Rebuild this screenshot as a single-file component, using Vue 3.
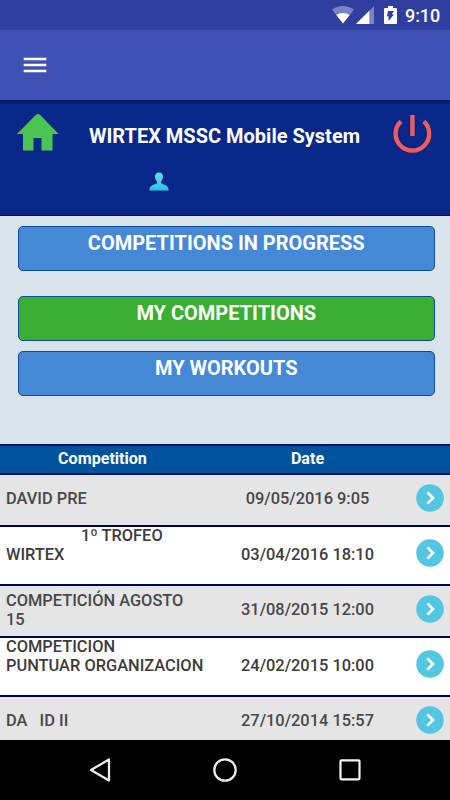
<script setup>
const buttons = [
  { label: 'COMPETITIONS IN PROGRESS', kind: 'first' },
  { label: 'MY COMPETITIONS', kind: 'active' },
  { label: 'MY WORKOUTS', kind: '' },
]
const rows = [
  { lines: ['DAVID PRE'], date: '09/05/2016 9:05', size: 'short' },
  { lines: ['1º TROFEO', 'WIRTEX', ' '], date: '03/04/2016 18:10', size: 'tall', indent: true },
  { lines: ['COMPETICIÓN AGOSTO', '15'], date: '31/08/2015 12:00', size: 'short' },
  { lines: ['COMPETICION', 'PUNTUAR ORGANIZACION', ' '], date: '24/02/2015 10:00', size: 'tall' },
  { lines: ['DA   ID II'], date: '27/10/2014 15:57', size: 'last' },
]
</script>

<template>
  <div class="phone">
    <div class="status">
      <svg class="wifi" width="22" height="18" viewBox="0 0 22 18">
        <path d="M0 3.6C6.5-1.1 15.5-1.1 22 3.6L11 17.6Z" fill="#7b84c3" />
        <path d="M4.3 9C8.3 6.2 13.7 6.2 17.7 9L11 17.6Z" fill="#fff" />
      </svg>
      <svg class="signal" width="18" height="18" viewBox="0 0 18 18">
        <path d="M0 18L18 0V18Z" fill="#7b84c3" />
        <path d="M0 18L13.3 4.7V18Z" fill="#fff" />
      </svg>
      <svg class="battery" width="13" height="18" viewBox="0 0 13 18">
        <path d="M4 0H9V2H12Q13 2 13 3V17Q13 18 12 18H1Q0 18 0 17V3Q0 2 1 2H4Z" fill="#fff" />
        <path d="M4 5H10L7.8 8.4H10L4.5 15V10.3H3Z" fill="#303f9f" />
      </svg>
      <span class="clock">9:10</span>
    </div>
    <div class="toolbar">
      <svg class="menu" width="24" height="18" viewBox="0 0 24 18">
        <path d="M.7 3H23.3M.7 9H23.3M.7 15H23.3" stroke="#fff" stroke-width="2.3" />
      </svg>
    </div>
    <header class="brand">
      <div class="brand-row">
        <svg width="42" height="37" viewBox="0 0 42 37">
          <path d="M19 .7Q21-.5 23 .7L41.5 20H35.5V36.5H24.5V24H16.5V36.5H6V20H0Z" fill="#4bc551" />
        </svg>
        <h1>WIRTEX MSSC Mobile System</h1>
        <svg width="40" height="40" viewBox="0 0 40 40">
          <path d="M8 7.4A16.8 16.8 0 1 0 30.8 7.4" fill="none" stroke="#f15b5b" stroke-width="4.4" />
          <path d="M19.4 1V22" stroke="#f15b5b" stroke-width="4.4" />
        </svg>
      </div>
      <svg class="user" width="20" height="19" viewBox="0 0 20 19">
        <defs>
          <linearGradient id="u" x1="0" y1="0" x2="0" y2="1">
            <stop offset="0" stop-color="#6bd9ee" />
            <stop offset="1" stop-color="#28c3e6" />
          </linearGradient>
        </defs>
        <path d="M10 .5C12.6.5 14.2 2.5 14 5C13.8 7.4 12.7 8.5 12.1 9.5V11.2C14.5 12.5 19.7 13 19.7 18.5H.3C.3 13 5.5 12.5 7.9 11.2V9.5C7.3 8.5 6.2 7.4 6 5C5.8 2.5 7.4.5 10 .5Z" fill="url(#u)" />
      </svg>
    </header>
    <nav class="actions">
      <button v-for="b in buttons" :key="b.label" :class="b.kind">{{ b.label }}</button>
    </nav>
    <section class="list">
      <div class="head">
        <span class="name">Competition</span>
        <span class="date">Date</span>
      </div>
      <div v-for="(r, n) in rows" :key="r.date" class="row" :class="[r.size, { alt: n % 2 === 0 }]">
        <div class="name">
          <div v-for="(l, i) in r.lines" :key="i" :class="{ indent: r.indent && i === 0 }">{{ l }}</div>
        </div>
        <div class="date">{{ r.date }}</div>
        <svg class="go" width="28" height="28" viewBox="0 0 28 28">
          <circle cx="14" cy="14" r="13.8" fill="#53c6e2" />
          <path d="M11.4 8.4L17 14L11.4 19.6" fill="none" stroke="#fff" stroke-width="2.7" />
        </svg>
      </div>
    </section>
    <footer class="navbar">
      <svg width="22" height="26" viewBox="0 0 22 26">
        <path d="M20 2.5V23.5L2 13Z" fill="none" stroke="#ececec" stroke-width="2.3" stroke-linejoin="round" />
      </svg>
      <svg width="26" height="26" viewBox="0 0 26 26">
        <circle cx="13" cy="13" r="10.7" fill="none" stroke="#ececec" stroke-width="2.3" />
      </svg>
      <svg width="24" height="26" viewBox="0 0 24 26">
        <rect x="2.5" y="3.3" width="19" height="19" rx="1" fill="none" stroke="#f4f4f4" stroke-width="2.2" />
      </svg>
    </footer>
  </div>
</template>

<style>
body { margin: 0; }
</style>

<style scoped>
.phone {
  width: 450px;
  height: 800px;
  display: flex;
  flex-direction: column;
  overflow: hidden;
  background: #d9e3eb;
  font-family: Roboto, sans-serif;
}
svg { display: block; flex: none; }
.status {
  height: 30px;
  flex: none;
  box-sizing: border-box;
  background: #303f9f;
  display: flex;
  padding: 6px 10px 0 0;
  justify-content: flex-end;
}
.signal { margin-left: 2px; }
.battery { margin: 0 8px 0 10px; }
.clock {
  width: 35px;
  color: #fff;
  font-size: 18px;
  line-height: 20px;
  font-weight: 500;
  letter-spacing: -0.1px;
  white-space: nowrap;
}
.toolbar {
  height: 70px;
  flex: none;
  background: #3f51b5;
  display: flex;
}
.menu { margin: 26px 0 0 23px; }
.brand {
  height: 116px;
  flex: none;
  box-sizing: border-box;
  background: linear-gradient(#041a60, #072888 5px);
  border-bottom: 1px solid #00007f;
}
.brand-row {
  height: 56px;
  box-sizing: border-box;
  display: flex;
  align-items: flex-start;
  padding: 14px 17px 0 17px;
  justify-content: space-between;
}
h1 {
  margin: 10px 3px 0 0;
  color: #fff;
  font-size: 20px;
  line-height: 24px;
  font-weight: 700;
  white-space: nowrap;
}
.user { margin: 16px 0 0 149px; }
.actions {
  height: 228px;
  flex: none;
  box-sizing: border-box;
  padding: 10px 15px 0 17.5px;
  display: flex;
  flex-direction: column;
  gap: 10px;
}
button {
  height: 45px;
  box-sizing: border-box;
  padding: 0 0 11px;
  border: 1px solid #0c4ba0;
  border-radius: 5px;
  background: #4589d6;
  color: #fff;
  font: 700 20px/22px Roboto, sans-serif;
}
button.first { margin-bottom: 15px; }
button.active { background: #39ae31; }
.head {
  height: 31px;
  box-sizing: border-box;
  border-top: 2px solid #001264;
  border-bottom: 2px solid #001264;
  background: #00529c;
  color: #fff;
  font-size: 16.1px;
  line-height: 25px;
  font-weight: 700;
  display: flex;
}
.head .name { width: 205px; text-align: center; }
.head .date { width: 205px; text-align: center; }
.list { height: 296px; flex: none; overflow: hidden; }
.row {
  box-sizing: border-box;
  display: flex;
  align-items: center;
  border-bottom: 2px solid #000060;
  background: #fff;
  color: #3c3c3c;
  font-size: 16.4px;
  line-height: 18.7px;
  font-weight: 500;
}
.row.alt { background: #e5e5e5; color: #484848; }
.row.short { height: 52px; padding-bottom: 4px; }
.row.tall { height: 59px; padding-bottom: 1px; }
.row.last { height: 52px; padding-bottom: 4px; }
.row .name { width: 199px; padding: 2px 0 0 6px; white-space: pre; }
.row.short .name { padding-top: 3px; }
.row.tall .name { padding-top: 0; }
.row .indent { padding-left: 75px; }
.row .date { width: 205px; padding-top: 2px; text-align: center; }
.row.tall .date { padding-top: 0; }
.go { margin-left: 6px; }
.row.tall .go { margin-bottom: 4px; }
.navbar {
  height: 60px;
  flex: none;
  background: #000;
  display: flex;
  align-items: center;
  justify-content: space-between;
  padding: 0 88px 0 89px;
}
</style>
